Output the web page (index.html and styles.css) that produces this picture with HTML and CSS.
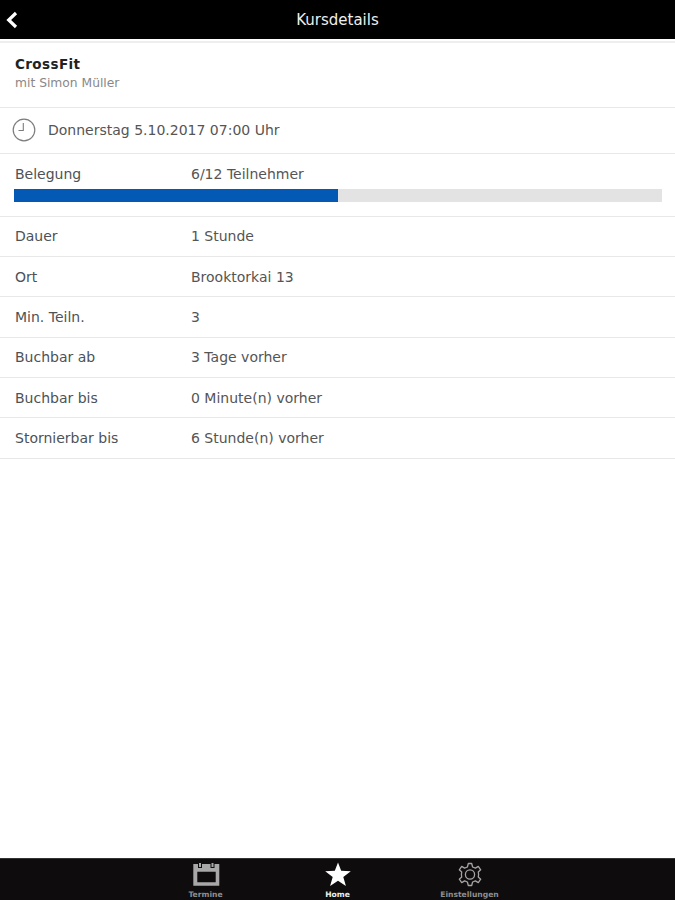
FILE: index.html
```html
<!DOCTYPE html>
<html lang="de">

<head>
    <meta charset="UTF-8">
    <title>Kursdetails</title>
    <link rel="stylesheet" href="styles.css">
</head>

<body>
    <div class="page">
        <div class="topbar">
            <svg class="back" width="14" height="20" viewBox="0 0 14 20">
                <path d="M11 3 L3.7 10 L11 17" fill="none" stroke="#fff" stroke-width="3.2"/>
            </svg>
            <span class="topbar-title">Kursdetails</span>
        </div>

        <div class="content">
            <div class="title-row">
                <div class="course">CrossFit</div>
                <div class="trainer">mit Simon Müller</div>
            </div>
            <div class="date-row">
                <svg class="clock" width="24" height="24" viewBox="0 0 24 24">
                    <circle cx="12" cy="12" r="10.8" fill="none" stroke="#7d7d7d" stroke-width="1.2"/>
                    <path d="M11.3 5 V12.5 H6.5" fill="none" stroke="#7d7d7d" stroke-width="1.1"/>
                </svg>
                <span>Donnerstag 5.10.2017 07:00 Uhr</span>
            </div>
            <div class="usage-row">
                <div class="usage-text">
                    <span class="label">Belegung</span>
                    <span>6/12 Teilnehmer</span>
                </div>
                <div class="bar">
                    <div class="bar-fill" style="width: 50%"></div>
                </div>
            </div>
            <div class="row"><span class="label">Dauer</span><span>1 Stunde</span></div>
            <div class="row"><span class="label">Ort</span><span>Brooktorkai 13</span></div>
            <div class="row"><span class="label">Min. Teiln.</span><span>3</span></div>
            <div class="row"><span class="label">Buchbar ab</span><span>3 Tage vorher</span></div>
            <div class="row"><span class="label">Buchbar bis</span><span>0 Minute(n) vorher</span></div>
            <div class="row"><span class="label">Stornierbar bis</span><span>6 Stunde(n) vorher</span></div>
        </div>

        <div class="tabbar">
            <div class="tab">
                <svg width="28" height="27" viewBox="0 0 28 27">
                    <path d="M1.3 3 H27.3 V24.7 H1.3 Z M5.3 10.7 V21.3 H23.7 V10.7 Z" fill="#a8a8a8" fill-rule="evenodd"/>
                    <rect x="6.5" y="1.5" width="3" height="5" fill="#a8a8a8" stroke="#0e0c0d" stroke-width="1"/>
                    <rect x="19" y="1.5" width="3" height="5" fill="#a8a8a8" stroke="#0e0c0d" stroke-width="1"/>
                </svg>
                <span class="tab-label">Termine</span>
            </div>
            <div class="tab tab-active">
                <svg width="28" height="27" viewBox="0 0 28 27">
                    <path d="M14 1.5 L17.2 9.8 L26.8 10.2 L19.3 16 L21.9 25 L14 19.8 L6.1 25 L8.7 16 L1.2 10.2 L10.8 9.8 Z" fill="#fff"/>
                </svg>
                <span class="tab-label">Home</span>
            </div>
            <div class="tab">
                <svg width="28" height="27" viewBox="0 0 28 27">
                    <path d="M12.3 2.5 H15.7 L16.6 6 L19.4 7.1 L22.3 5.4 L24.7 8.8 L22.3 11 L22.6 13.5 L22.3 16 L24.7 18.2 L22.3 21.6 L19.4 19.9 L16.6 21 L15.7 24.5 H12.3 L11.4 21 L8.6 19.9 L5.7 21.6 L3.3 18.2 L5.7 16 L5.4 13.5 L5.7 11 L3.3 8.8 L5.7 5.4 L8.6 7.1 L11.4 6 Z" fill="none" stroke="#a5a5a5" stroke-width="1.3" stroke-linejoin="round"/>
                    <circle cx="14" cy="13.5" r="4.6" fill="none" stroke="#a5a5a5" stroke-width="1.3"/>
                </svg>
                <span class="tab-label">Einstellungen</span>
            </div>
        </div>
    </div>
</body>

</html>
```

FILE: styles.css
```css
* {
    margin: 0;
    padding: 0;
    box-sizing: border-box;
}

body {
    background-color: #fff;
    font-family: "DejaVu Sans", sans-serif;
    font-size: 14px;
    color: #555;
}

.page {
    width: 675px;
    height: 900px;
    display: flex;
    flex-direction: column;
    overflow: hidden;
}

.topbar {
    height: 39px;
    background-color: #000;
    display: flex;
    align-items: center;
    justify-content: center;
    position: relative;
    flex-shrink: 0;
}

.back {
    position: absolute;
    left: 5px;
    top: 10px;
}

.topbar-title {
    color: #eee;
    font-size: 15px;
}

.content {
    flex: 1;
    padding-top: 2px;
}

.title-row,
.date-row,
.usage-row,
.row {
    border-bottom: 1px solid #e8e8e8;
}

.title-row {
    border-top: 2px solid #eee;
    height: 66.5px;
    padding: 13px 15px 0;
}

.course {
    font-size: 13.5px;
    font-weight: bold;
    color: #222;
    letter-spacing: 0.4px;
}

.trainer {
    font-size: 12.3px;
    color: #888;
    margin-top: 4px;
}

.date-row {
    height: 46px;
    display: flex;
    align-items: center;
    gap: 12px;
    padding-left: 12px;
}

.usage-row {
    height: 63px;
    padding: 12px 13.5px 0 14px;
}

.usage-text {
    display: flex;
    height: 16px;
    align-items: center;
    padding-left: 1px;
}

.label {
    width: 176px;
    flex-shrink: 0;
    color: #4c5258;
}

.bar {
    height: 13px;
    margin-top: 7.5px;
    background-color: #e3e3e3;
}

.bar-fill {
    height: 100%;
    background-color: #0459b4;
}

.row {
    height: 40.4px;
    display: flex;
    align-items: center;
    padding-left: 15px;
}

.tabbar {
    height: 42px;
    background-color: #0e0c0d;
    border-top: 1px solid #333;
    display: flex;
    justify-content: center;
    flex-shrink: 0;
}

.tab {
    width: 132px;
    display: flex;
    flex-direction: column;
    align-items: center;
    padding-top: 2px;
    color: #8f8f8f;
}

.tab-active {
    color: #eee;
}

.tab-label {
    font-size: 7.6px;
    font-weight: bold;
    line-height: 9px;
    margin-top: 2px;
}
```
